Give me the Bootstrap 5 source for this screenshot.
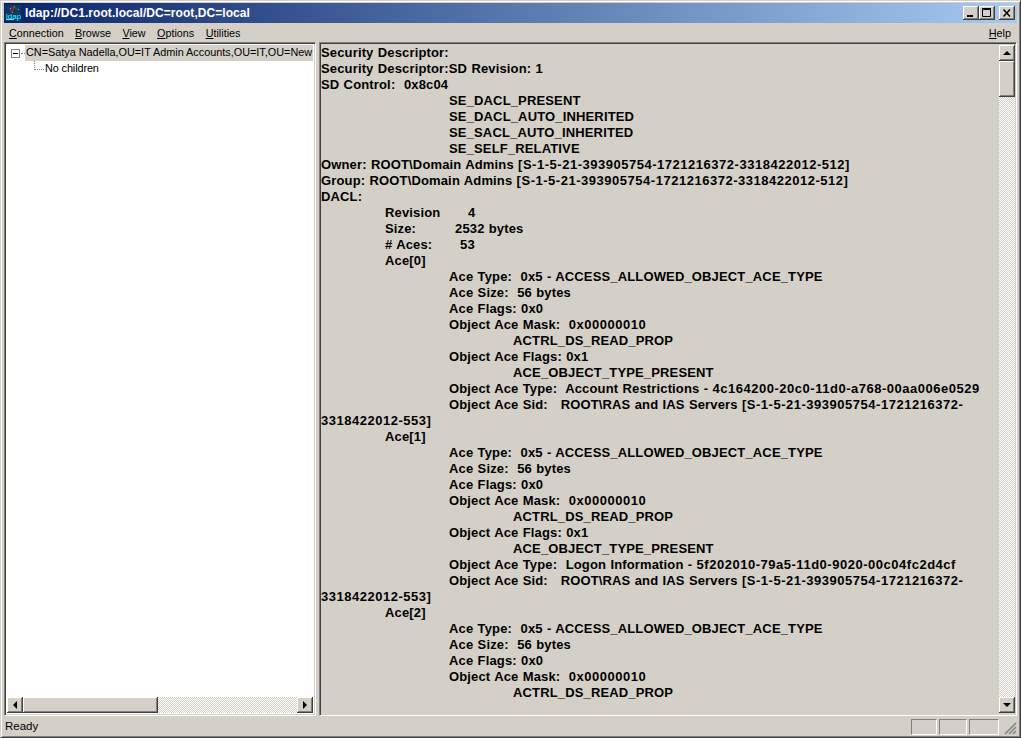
<!DOCTYPE html>
<html lang="en"><head><meta charset="utf-8"><title>ldap</title>
<link href="https://cdn.jsdelivr.net/npm/bootstrap@5.3.0/dist/css/bootstrap.min.css" rel="stylesheet">
<style>
html,body{height:738px;overflow:hidden}
body{background:#d4d0c8;font-family:"Liberation Sans",sans-serif;font-size:11px;color:#000;line-height:1}
.win{height:738px;width:1021px;border:1px solid #d4d0c8;border-right-color:#404040;border-bottom-color:#404040;box-shadow:inset 1px 1px 0 #fff,inset -1px -1px 0 #808080;padding:2px 3px 3px 3px}
.tbar{height:20px;background:linear-gradient(90deg,#0a246a,#a6caf0);color:#fff;font-weight:700;font-size:12px;letter-spacing:.06px;padding:0 2px 0 1px;flex:none}
.tbtn{width:16px;height:14px;background:#d4d0c8;box-shadow:inset -1px -1px 0 #404040,inset 1px 1px 0 #fff,inset -2px -2px 0 #808080;display:block}
.mbar{height:19px;padding:1px 6px 0 5px;flex:none;font-size:10.8px;gap:11.4px}
.mbar u{text-underline-offset:1px}
.panes{flex:1 1 auto;min-height:0;gap:3px}
.sunk{border:1px solid;border-color:#808080 #fff #fff #808080;box-shadow:inset 1px 1px 0 #404040,inset -1px -1px 0 #d4d0c8}
.ltree{width:312px;flex:none;background:#fff;padding:2px}
.treebody{flex:1 1 auto;min-height:0;overflow:hidden;font-size:10.85px}
.trow{height:16px;white-space:nowrap}
.sel{background:#d4d0c8;flex:1 1 auto;overflow:hidden;padding:2px 0 0 1px;height:16px}
.nochild{padding:0 0 2px 1px;letter-spacing:-.1px}
.pm{width:9px;height:9px;border:1px solid #808080;position:relative;flex:none;margin:0 1px 0 4px;background:#fff}
.pm:after{content:"";position:absolute;left:1px;right:1px;top:3px;height:1px;background:#000}
.dot{border-top:1px dotted #808080;width:4px;flex:none}
.elbow{width:10px;height:9px;border-left:1px dotted #808080;border-bottom:1px dotted #808080;margin:-7px 0 0 27px;flex:none}
.sb{background:#eee;background-image:conic-gradient(#d4d0c8 25%,#fff 0 50%,#d4d0c8 0 75%,#fff 0);background-size:2px 2px;flex:none}
.sbh{height:16px}.sbv{width:16px}
.sbtn{width:16px;height:16px;background:#d4d0c8;box-shadow:inset -1px -1px 0 #404040,inset 1px 1px 0 #fff,inset -2px -2px 0 #808080;flex:none}
.thumbh{width:135px}.thumbv{height:36px}
.rpane{flex:1 1 auto;min-width:0;padding:2px 1px 2px 1px;background:#d4d0c8}
.dtext{flex:1 1 auto;min-width:0;overflow:hidden;font-weight:700;font-size:13px;letter-spacing:.15px;word-spacing:.5px;line-height:16px;white-space:pre}
.sid{letter-spacing:.52px}
.l1{padding-left:64px}.l2{padding-left:128px}.l3{padding-left:192px}
.lb{display:inline-block}.lb1{width:83px}.lb2{width:70px}.lb3{width:75px}
.sbar{height:18px;flex:none;padding:4px 0 0 1px;font-size:11.5px}
.cell{height:16px;border:1px solid;border-color:#808080 #fff #fff #808080;margin-left:2px}
.c1{width:26px}.c2{width:28px}.c3{width:30px}
.grip{width:15px;height:15px;flex:none;margin-left:3px}
.ico{font-size:8px;font-weight:400;letter-spacing:0}
</style></head><body>
<div class="win d-flex flex-column">
 <div class="tbar d-flex align-items-center">
  <svg width="16" height="16" viewBox="0 0 16 16" class="me-1"><rect width="16" height="16" fill="#0a3a6a"/><path d="M5 4l4-2 4 3M5 4l2 4M9 2l-2 6" stroke="#c02020" fill="none"/><path d="M5 3h1v1H5zM9 1h1v1H9zM13 4h1v1h-1zM7 7h1v1H7z" fill="#20e020"/><text class="ico" x="1" y="14" fill="#40f0ff">ldap</text><rect x="1" y="14" width="8" height="1" fill="#40f0ff"/></svg>
  <span class="flex-grow-1">ldap://DC1.root.local/DC=root,DC=local</span>
  <span class="tbtn"><svg width="16" height="14"><rect x="4" y="9" width="6" height="2" fill="#000"/></svg></span>
  <span class="tbtn"><svg width="16" height="14"><path d="M3.500 3.500h8v7h-8z M3 2.500h9" stroke="#000" fill="none"/></svg></span>
  <span class="tbtn ms-1"><svg width="16" height="14"><path d="M4.500 3.500l6.500 7M11 3.500l-6.500 7" stroke="#000" stroke-width="1.500" fill="none"/></svg></span>
 </div>
 <div class="mbar d-flex align-items-center">
  <span><u>C</u>onnection</span><span><u>B</u>rowse</span><span><u>V</u>iew</span><span><u>O</u>ptions</span><span><u>U</u>tilities</span>
  <span class="ms-auto"><u>H</u>elp</span>
 </div>
 <div class="panes d-flex">
  <div class="ltree sunk d-flex flex-column">
   <div class="treebody">
    <div class="trow d-flex align-items-center"><span class="pm"></span><span class="dot"></span><span class="sel">CN=Satya Nadella,OU=IT Admin Accounts,OU=IT,OU=New</span></div>
    <div class="trow d-flex align-items-center"><span class="elbow"></span><span class="nochild">No children</span></div>
   </div>
   <div class="d-flex sb sbh">
    <span class="sbtn d-flex align-items-center justify-content-center"><svg width="5" height="8"><path d="M4 0v8L0 4z"/></svg></span>
    <span class="sbtn thumbh"></span>
    <span class="flex-grow-1"></span>
    <span class="sbtn d-flex align-items-center justify-content-center"><svg width="5" height="8"><path d="M0 0v8l4-4z"/></svg></span>
   </div>
  </div>
  <div class="rpane sunk d-flex">
   <div class="dtext"><div>Security Descriptor:</div><div>Security Descriptor:SD Revision: 1</div><div>SD Control:  0x8c04</div><div class="l2">SE_DACL_PRESENT</div><div class="l2">SE_DACL_AUTO_INHERITED</div><div class="l2">SE_SACL_AUTO_INHERITED</div><div class="l2">SE_SELF_RELATIVE</div><div>Owner: ROOT\Domain Admins <span class="sid">[S-1-5-21-393905754-1721216372-3318422012-512]</span></div><div>Group: ROOT\Domain Admins <span class="sid">[S-1-5-21-393905754-1721216372-3318422012-512]</span></div><div>DACL:</div><div class="l1"><span class="lb lb1">Revision</span>4</div><div class="l1"><span class="lb lb2">Size:</span>2532 bytes</div><div class="l1"><span class="lb lb3"># Aces:</span>53</div><div class="l1">Ace[0]</div><div class="l2">Ace Type:  0x5 - ACCESS_ALLOWED_OBJECT_ACE_TYPE</div><div class="l2">Ace Size:  56 bytes</div><div class="l2">Ace Flags: 0x0</div><div class="l2">Object Ace Mask:  <span class="sid">0x00000010</span></div><div class="l3">ACTRL_DS_READ_PROP</div><div class="l2">Object Ace Flags: 0x1</div><div class="l3">ACE_OBJECT_TYPE_PRESENT</div><div class="l2">Object Ace Type:  Account Restrictions - <span class="sid">4c164200-20c0-11d0-a768-00aa006e0529</span></div><div class="l2">Object Ace Sid:   ROOT\RAS and IAS Servers <span class="sid">[S-1-5-21-393905754-1721216372-</span></div><div><span class="sid">3318422012-553]</span></div><div class="l1">Ace[1]</div><div class="l2">Ace Type:  0x5 - ACCESS_ALLOWED_OBJECT_ACE_TYPE</div><div class="l2">Ace Size:  56 bytes</div><div class="l2">Ace Flags: 0x0</div><div class="l2">Object Ace Mask:  <span class="sid">0x00000010</span></div><div class="l3">ACTRL_DS_READ_PROP</div><div class="l2">Object Ace Flags: 0x1</div><div class="l3">ACE_OBJECT_TYPE_PRESENT</div><div class="l2">Object Ace Type:  Logon Information - <span class="sid">5f202010-79a5-11d0-9020-00c04fc2d4cf</span></div><div class="l2">Object Ace Sid:   ROOT\RAS and IAS Servers <span class="sid">[S-1-5-21-393905754-1721216372-</span></div><div><span class="sid">3318422012-553]</span></div><div class="l1">Ace[2]</div><div class="l2">Ace Type:  0x5 - ACCESS_ALLOWED_OBJECT_ACE_TYPE</div><div class="l2">Ace Size:  56 bytes</div><div class="l2">Ace Flags: 0x0</div><div class="l2">Object Ace Mask:  <span class="sid">0x00000010</span></div><div class="l3">ACTRL_DS_READ_PROP</div></div>
   <div class="sb sbv d-flex flex-column">
    <span class="sbtn d-flex align-items-center justify-content-center"><svg width="8" height="5"><path d="M0 4h8L4 0z"/></svg></span>
    <span class="sbtn thumbv"></span>
    <span class="flex-grow-1"></span>
    <span class="sbtn d-flex align-items-center justify-content-center"><svg width="8" height="5"><path d="M0 0h8L4 4z"/></svg></span>
   </div>
  </div>
 </div>
 <div class="sbar d-flex align-items-center">
  <span class="flex-grow-1">Ready</span>
  <span class="cell c1"></span><span class="cell c2"></span><span class="cell c3"></span>
  <svg class="grip" viewBox="0 0 15 15"><path d="M14 3L3 14M14 7L7 14M14 11L11 14" stroke="#808080" stroke-width="1.500"/></svg>
 </div>
</div>
</body></html>
